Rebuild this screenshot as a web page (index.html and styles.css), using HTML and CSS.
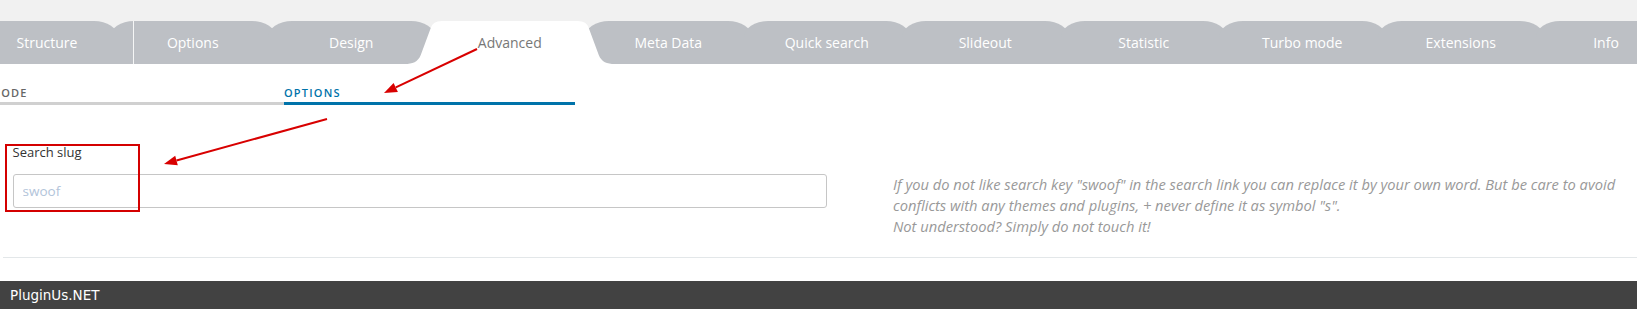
FILE: index.html
```html
<!DOCTYPE html>
<html lang="en">
<head>
<meta charset="utf-8">
<title>Advanced options</title>
<link rel="stylesheet" href="styles.css">
</head>
<body>
<div class="page">
  <div class="tabbar">
    <nav class="tabs">
      <div class="tab tab-first">Structure</div>
      <div class="tab tab-options">Options</div>
      <div class="tab">Design</div>
      <div class="tab tab-active">Advanced</div>
      <div class="tab">Meta Data</div>
      <div class="tab">Quick search</div>
      <div class="tab">Slideout</div>
      <div class="tab">Statistic</div>
      <div class="tab">Turbo mode</div>
      <div class="tab">Extensions</div>
      <div class="tab tab-last">Info</div>
    </nav>
  </div>

  <div class="subtabs">
    <div class="subtab">Code</div>
    <div class="subtab subtab-active">Options</div>
  </div>

  <div class="content">
    <div class="option-row">
      <div class="option-field">
        <label class="option-label" for="slug">Search slug</label>
        <input class="option-input" id="slug" type="text" value="swoof">
      </div>
      <div class="option-help">If you do not like search key "swoof" in the search link you can replace it by your own word. But be care to avoid conflicts with any themes and plugins, + never define it as symbol "s".<br>Not understood? Simply do not touch it!</div>
    </div>
  </div>

  <div class="divider"></div>

  <footer class="footer">PluginUs.NET</footer>

  <div class="highlight-box"></div>
  <svg class="annotations" width="1637" height="309" viewBox="0 0 1637 309">
    <line x1="477" y1="49" x2="395.8" y2="87.4" stroke="#d80000" stroke-width="2"/>
    <polygon points="384,93 397.9,92 393.6,82.9" fill="#d80000"/>
    <line x1="327" y1="119" x2="176.5" y2="160.5" stroke="#d80000" stroke-width="2"/>
    <polygon points="164,164 177.8,165.3 175.2,155.7" fill="#d80000"/>
  </svg>
</div>
</body>
</html>
```

FILE: styles.css
```css
html, body {
  margin: 0;
  padding: 0;
  background: #fff;
  overflow: hidden;
}

.page {
  position: relative;
  width: 1637px;
  height: 309px;
  overflow: hidden;
  font-family: "Open Sans", "Liberation Sans", sans-serif;
}

/* main tabs */
.tabbar {
  background: #f1f1f1;
  padding-top: 21px;
  overflow: hidden;
}

.tabs {
  display: flex;
  height: 43px;
}

.tab {
  flex: none;
  width: 166.5px;
  height: 43px;
  margin-left: -8px;
  border-radius: 24px 24px 0 0 / 16px 16px 0 0;
  background: #bdc0c5;
  color: #fff;
  font-size: 14px;
  line-height: 43px;
  text-align: center;
  white-space: nowrap;
}

.tab-first {
  width: 141px;
  margin-left: -23.5px;
}

.tab-last {
  width: 140px;
}

.tab-options {
  background: linear-gradient(90deg, transparent 23px, rgba(255,255,255,0.85) 23px, rgba(255,255,255,0.85) 24px, transparent 24px), #bdc0c5;
}

.tab-active {
  position: relative;
  z-index: 1;
  width: 214.5px;
  margin-left: -32px;
  margin-right: -24px;
  border-radius: 0;
  background: #fff;
  color: #777;
  clip-path: path('M 2.25 43 C 10 43 15.5 41 18.25 34 L 28.25 7 Q 30.25 0 39.25 0 L 175.25 0 Q 184.25 0 186.25 7 L 196.25 34 C 199 41 204.5 43 212.25 43 Z');
}

/* sub tabs */
.subtabs {
  display: flex;
  margin: 21px 0 0 -7px;
}

.subtab {
  flex: none;
  width: 291px;
  font-size: 11px;
  font-weight: 600;
  letter-spacing: 1.2px;
  text-transform: uppercase;
  line-height: 16px;
  padding-bottom: 1px;
  border-bottom: 3px solid #d0d0d0;
  color: #666;
}

.subtab-active {
  color: #0073aa;
  border-bottom-color: #0073aa;
}

/* content */
.content {
  padding: 38px 0 0 12.5px;
}

.option-row {
  display: flex;
  align-items: flex-start;
}

.option-field {
  flex: none;
  width: 814.5px;
}

.option-label {
  display: block;
  font-size: 13px;
  line-height: 18px;
  color: #333;
  margin-bottom: 13px;
}

.option-input {
  display: block;
  box-sizing: border-box;
  width: 100%;
  height: 34px;
  margin: 0;
  padding: 0 9px;
  border: 1px solid #c6c6c6;
  border-radius: 3px;
  background: #fff;
  font-family: "Open Sans", "Liberation Sans", sans-serif;
  font-size: 13.5px;
  color: #b2c4da;
  outline: none;
}

.option-help {
  flex: 1;
  margin: 31px 0 0 66px;
  padding-right: 12px;
  font-size: 14.7px;
  font-style: italic;
  line-height: 21px;
  color: #999;
}

.divider {
  margin: 20px 0 0 3px;
  height: 1px;
  background: #e3e7e9;
}

.footer {
  margin-top: 23px;
  height: 28px;
  padding-left: 10px;
  background: #424242;
  color: #fff;
  font-family: "DejaVu Sans", sans-serif;
  font-size: 13.5px;
  line-height: 28px;
}

/* annotations */
.highlight-box {
  position: absolute;
  z-index: 2;
  left: 5px;
  top: 144px;
  width: 135px;
  height: 68px;
  box-sizing: border-box;
  border: 2px solid #d40000;
}

.annotations {
  position: absolute;
  z-index: 3;
  left: 0;
  top: 0;
  pointer-events: none;
}
```
